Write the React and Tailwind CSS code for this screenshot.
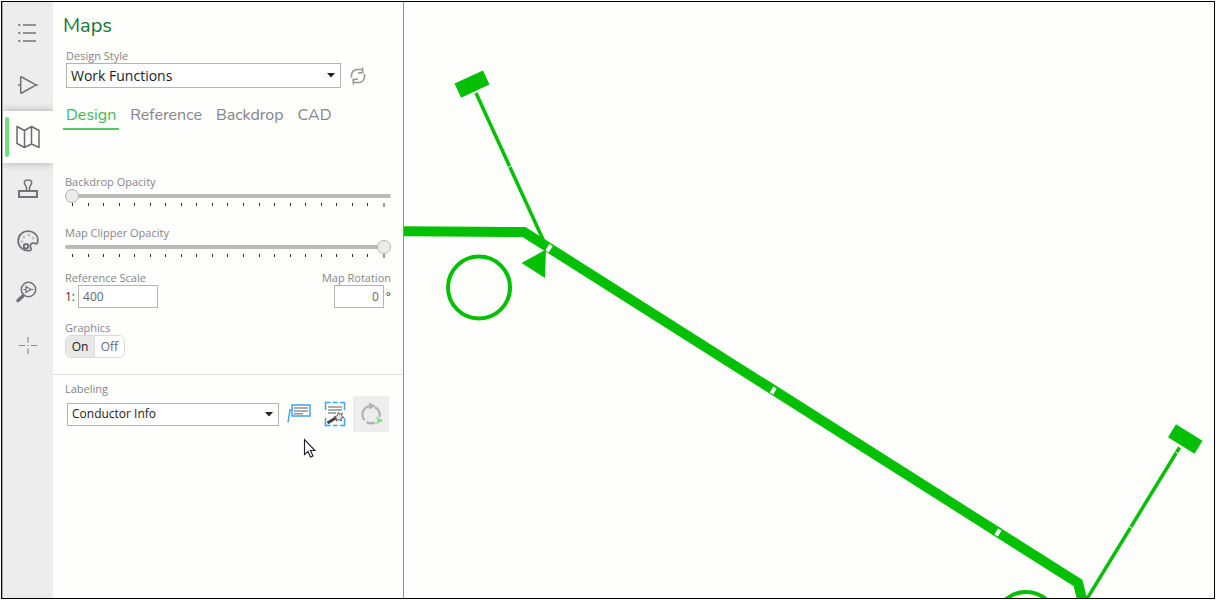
import { useState } from "react";

const ListIcon = () => (
  <svg width="20" height="20" viewBox="0 0 20 20" fill="none" stroke="#747478" strokeWidth="1.400">
    {[2, 10, 18].map((y) => (
      <path key={y} d={`M0 ${y}h2.500M5 ${y}h13`} />
    ))}
  </svg>
);

const DeviceIcon = () => (
  <svg width="22" height="20" viewBox="0 0 22 20" fill="none" stroke="#727276" strokeWidth="1.500">
    <path d="M1 10h3M18 10h3M3.700 2.600v14.800q0 1.200 1 .6L18 10.600q1-.6 0-1.200L4.700 2q-1-.6-1 .6z" />
  </svg>
);

const MapIcon = () => (
  <svg width="24" height="24" viewBox="0 0 24 24" fill="none" stroke="#6b6b70" strokeWidth="1.500" strokeLinejoin="round">
    <path d="M1 1.500l7.500 4v17L1 18.500zM8.500 5.500l7-4v17.500l-7 3.500M15.500 1.500l7.500 4v17l-7.500-3.500" />
  </svg>
);

const StampIcon = () => (
  <svg width="22" height="20" viewBox="0 0 22 20" fill="none" stroke="#727276">
    <path strokeWidth="2" d="M2 12h18v6H2z" />
    <path strokeWidth="1.500" d="M9.500 11.500V8.500L7.500 4.500V2.500Q8 1 11 1t3.500 1.500v2L12.500 8.500v3" />
  </svg>
);

const PaletteIcon = () => (
  <svg width="22" height="22" viewBox="0 0 22 22" fill="none" stroke="#727276">
    <path
      strokeWidth="1.800"
      d="M13.500 20.300C8 21.800 1.200 17.800 1.200 11 1.200 5.200 5.500 1.200 11 1.200c5.600 0 9.800 3.600 9.800 8.200 0 1.800-.2 3.600-.8 4-1 .6-2.700-.7-4.600-.3-2.400.6-2.300 3.300-1.600 4.700.4.900.4 2.200-.3 2.500z"
    />
    <circle cx="9" cy="16.300" r="2.200" strokeWidth="2" />
    <g fill="#c4c4c6" stroke="none">
      <circle cx="4.800" cy="11.500" r="1.500" />
      <circle cx="6.800" cy="7" r="1.500" />
      <circle cx="11.800" cy="5" r="1.500" />
      <circle cx="16" cy="8" r="1.500" />
    </g>
  </svg>
);

const SearchDeviceIcon = () => (
  <svg width="26" height="24" viewBox="0 0 26 24" fill="none" stroke="#727276">
    <circle cx="13.500" cy="8.500" r="7.200" strokeWidth="1.500" />
    <path strokeWidth="1.200" d="M8.500 8.500h2.500M16 8.500h2.500M11 5.500v6l5-3z" />
    <path strokeWidth="3.500" strokeLinecap="round" d="M3 19.500l5-4.500" />
  </svg>
);

const CrosshairIcon = () => (
  <svg width="20" height="20" viewBox="0 0 20 20" fill="none" stroke="#8c8c90" strokeWidth="1.200">
    <path d="M1 10.500h6M13 10.500h6M10 2v5.500M10 13.500v5.500" />
    <path d="M9 10.500h2" stroke="#b4b4b6" />
  </svg>
);

const RefreshIcon = () => (
  <svg width="16" height="18" viewBox="0 0 16 18" fill="none" stroke="#969698" strokeWidth="1.600">
    <path d="M1.500 10.500V8q.5-4.500 5-5.500H12M12.500.5l.3 5-4.800.5M14.500 7v3q-.5 4.500-5 5.500H4M3.500 17.500l-.3-5 4.800-.5" />
  </svg>
);

const CalloutIcon = () => (
  <svg width="24" height="20" viewBox="0 0 24 20" fill="none">
    <path d="M1 18.500L3 6h2" stroke="#3fa4f2" strokeWidth="1.500" />
    <path d="M5 1h18v11H5z" stroke="#3fa4f2" strokeWidth="1.500" />
    <path d="M7 4h14M7 7h14M7 9.700h9" stroke="#929294" strokeWidth="1.400" />
  </svg>
);

const AutoLabelIcon = () => (
  <svg width="22" height="26" viewBox="0 0 22 26" fill="none">
    <path
      d="M1.500 9V1.500H6.500M9 1.500h4.500M16 1.500h4.500V9M1.500 17v7.500H6.500M9 24.500h4.500M16 24.500h4.500V17"
      stroke="#3fa4f2"
      strokeWidth="1.500"
    />
    <path d="M4 6h14M4 9h14M4 12h8" stroke="#929294" strokeWidth="1.500" />
    <path d="M3.500 22l9-5.500" stroke="#444444" strokeWidth="3" />
    <path
      d="M14.500 11l1 2.500 3-1.500-1 3 2.500 1.500-3 .5.500 3-2.500-1.500-2.500 1.500V17l-2.500-1.500 3-.5z"
      fill="#e4e4e4"
      stroke="#66666a"
      strokeWidth="1"
    />
  </svg>
);

const RerunIcon = () => (
  <svg width="24" height="24" viewBox="0 0 24 24" fill="none">
    <path d="M10 4.300A8.500 8.500 0 0 0 5.500 18M15.500 5A8.500 8.500 0 0 1 20.500 15M7.500 20q4 2.500 8.500.5" stroke="#b2b2b4" strokeWidth="2.200" />
    <path d="M10 .5l6.500 3.500-6.500 3.500z" fill="#b2b2b4" />
    <path d="M17 14.500l7 4-7 4 1.500-4z" fill="#85dc90" />
  </svg>
);

const navItems = [
  { name: "List", icon: ListIcon },
  { name: "Devices", icon: DeviceIcon },
  { name: "Maps", icon: MapIcon },
  { name: "Stamp", icon: StampIcon },
  { name: "Styles", icon: PaletteIcon },
  { name: "Find", icon: SearchDeviceIcon },
  { name: "Locate", icon: CrosshairIcon },
];

const Sidebar = () => (
  <nav className="flex w-[51px] shrink-0 flex-col border-l border-[#a9adb3] bg-[#ededee] pt-[5px]">
    {navItems.map(({ name, icon: Icon }) =>
      name === "Maps" ? (
        <button
          key={name}
          aria-label={name}
          className="flex h-[52px] items-center bg-[#fefefd] pl-0.5 shadow-[0_0_8px_rgba(0,0,0,0.3)] [clip-path:inset(-10px_0_-10px_0)]"
        >
          <span className="h-10 w-1 rounded-full bg-[#6ee07a]" />
          <span className="flex grow justify-center pr-1.5">
            <Icon />
          </span>
        </button>
      ) : (
        <button key={name} aria-label={name} className="flex h-[52px] items-center justify-center">
          <Icon />
        </button>
      )
    )}
  </nav>
);

const Dropdown = ({ id, value, className }) => (
  <div className="grid grow items-center">
    <select
      id={id}
      className={`w-full appearance-none rounded-none border border-[#b4b4b4] bg-white px-1 text-[#1c1c1c] [grid-area:1/1] ${className}`}
    >
      <option>{value}</option>
    </select>
    <svg className="pointer-events-none mr-[5px] justify-self-end [grid-area:1/1]" width="10" height="5" viewBox="0 0 10 5">
      <path d="M1 0h8L5 4.500z" fill="#222" />
    </svg>
  </div>
);

const OpacitySlider = ({ id, label, initial }) => {
  const [value, setValue] = useState(initial);
  return (
    <div className="flex flex-col">
      <label htmlFor={id} className="h-[15px] leading-4">
        {label}
      </label>
      <input
        id={id}
        type="range"
        min="0"
        max="100"
        value={value}
        onChange={(e) => setValue(e.target.value)}
        className="h-3.5 w-full appearance-none bg-transparent [&::-webkit-slider-runnable-track]:h-1 [&::-webkit-slider-runnable-track]:rounded-full [&::-webkit-slider-runnable-track]:bg-[#bababa] [&::-webkit-slider-thumb]:-mt-[5px] [&::-webkit-slider-thumb]:size-3.5 [&::-webkit-slider-thumb]:appearance-none [&::-webkit-slider-thumb]:rounded-full [&::-webkit-slider-thumb]:border [&::-webkit-slider-thumb]:border-[#b4b4b4] [&::-webkit-slider-thumb]:bg-[#ececec]"
      />
      <div className="flex h-1 justify-between pr-1.5 pl-[7px]">
        {Array.from({ length: 21 }, (_, i) => (
          <span key={i} className={i === 20 ? "h-1 w-0.5 bg-[#999999]" : "h-[3px] w-px bg-[#333333]"} />
        ))}
      </div>
    </div>
  );
};

const tabs = ["Design", "Reference", "Backdrop", "CAD"];

const MapsPanel = () => {
  const [tab, setTab] = useState("Design");
  return (
    <section className="w-[351px] shrink-0 border-r border-[#42c45a] bg-[#fefefd] text-[11px] text-[#858588]">
      <h1 className="pt-2.5 pl-2.5 font-[Nunito,'Noto_Sans',sans-serif] text-xl leading-7 text-[#0f7a33]">Maps</h1>

      <div className="flex flex-col pt-2 pr-3 pl-[13px]">
        <label htmlFor="design-style" className="h-[15px] leading-4">
          Design Style
        </label>
        <div className="flex items-center gap-[9px] pr-[25px]">
          <Dropdown id="design-style" value="Work Functions" className="h-[25px] text-sm" />
          <button aria-label="Refresh styles">
            <RefreshIcon />
          </button>
        </div>
      </div>

      <div role="tablist" className="flex gap-2 pt-[15px] pl-2.5 font-[Nunito,'Noto_Sans',sans-serif] text-base leading-6">
        {tabs.map((name) => (
          <button
            key={name}
            role="tab"
            aria-selected={tab === name}
            onClick={() => setTab(name)}
            className={`border-b-2 px-[3px] pb-px ${tab === name ? "border-[#4bcb62] text-[#3fb956]" : "border-transparent"}`}
          >
            {name}
          </button>
        ))}
      </div>

      <div className="flex flex-col gap-[18px] pt-11 pr-3 pl-3">
        <OpacitySlider id="backdrop-opacity" label="Backdrop Opacity" initial={0} />
        <OpacitySlider id="clipper-opacity" label="Map Clipper Opacity" initial={100} />
      </div>

      <div className="flex justify-between pt-3 pr-3 pl-3">
        <div className="flex flex-col">
          <label htmlFor="reference-scale" className="h-[15px] leading-4">
            Reference Scale
          </label>
          <div className="flex items-center gap-[3px] text-xs text-[#333333]">
            <span>1:</span>
            <input
              id="reference-scale"
              defaultValue="400"
              className="h-[23px] w-20 border border-[#b4b4b4] bg-white px-1 text-[#66666a]"
            />
          </div>
        </div>
        <div className="flex flex-col items-end">
          <label htmlFor="map-rotation" className="h-[15px] leading-4">
            Map Rotation
          </label>
          <div className="flex items-center gap-0.5 text-xs text-[#333333]">
            <input
              id="map-rotation"
              defaultValue="0"
              className="h-[23px] w-[50px] border border-[#b4b4b4] bg-white px-1 text-right text-[#66666a]"
            />
            <span>°</span>
          </div>
        </div>
      </div>

      <div className="flex flex-col items-start border-b border-[#dcdcdc] pt-3 pb-4 pl-3">
        <span id="graphics-label" className="h-[15px] leading-4">
          Graphics
        </span>
        <div role="group" aria-labelledby="graphics-label" className="flex h-[23px] rounded-md border border-[#dadada] text-xs">
          <button className="w-[29px] rounded-l-md border-r border-[#dadada] bg-[#e8e8e8] text-[#1c1c1c]">On</button>
          <button className="w-[29px] rounded-r-md bg-white text-[#66666a]">Off</button>
        </div>
      </div>

      <div className="flex flex-col pt-1.5 pr-3.5 pl-3">
        <label htmlFor="labeling" className="h-[15px] leading-4">
          Labeling
        </label>
        <div className="flex items-center pl-0.5">
          <Dropdown id="labeling" value="Conductor Info" className="h-[23px] text-xs" />
          <button aria-label="Add label" className="ml-2">
            <CalloutIcon />
          </button>
          <button aria-label="Auto label" className="ml-[13px]">
            <AutoLabelIcon />
          </button>
          <button aria-label="Rerun" className="ml-[7px] flex size-9 items-center justify-center bg-[#ededee]">
            <RerunIcon />
          </button>
        </div>
      </div>
    </section>
  );
};

const NetworkMap = () => (
  <svg
    className="h-full min-w-0 grow bg-[#fefefd]"
    viewBox="404 2 810 596"
    preserveAspectRatio="xMinYMin slice"
    fill="none"
    stroke="#04c004"
    aria-label="Network map"
  >
    {/* Main conductor with its joints */}
    <path strokeWidth="10" d="M400 231.300L524 232 1078 583l5 20" />
    <g stroke="#fefefd" strokeWidth="4">
      <path d="M547 251.500l4-6.500M771.500 393.500l3.500-6M996.200 535.500l3.500-6" />
    </g>
    {/* Service lines */}
    <path strokeWidth="3.500" d="M476 93L546 246M1179.500 447.500L1085 602" />
    <g stroke="#fefefd" strokeWidth="1">
      <path d="M508 167.500l4-2M1129 526.500l3.500 2M1175.500 452l4 2.500" />
    </g>
    <g fill="#04c004" stroke="none">
      <path d="M454.500 83.500L483 70.500l6.500 14L461 97.700zM1176 424.300l26.500 16.500-8 13L1168 437.300zM521.500 263l24.500-13.500-1 28.500z" />
    </g>
    <circle cx="479" cy="287.500" r="31" strokeWidth="4" />
    <circle cx="1026" cy="623" r="31" strokeWidth="4" />
  </svg>
);

const Pointer = () => (
  <svg className="pointer-events-none absolute top-[438px] left-[303px]" width="13" height="21" viewBox="0 0 13 21">
    <path
      d="M1.500 1.500v15l3.500-3 2.500 5.500 2.500-1-2.500-5.500h4.500z"
      fill="#fff"
      stroke="#1c1c2c"
      strokeWidth="1.100"
    />
  </svg>
);

export default function App() {
  return (
    <div className="relative h-screen bg-white p-px font-['Open_Sans','Noto_Sans',sans-serif]">
      <main className="flex h-full overflow-hidden border border-black">
        <Sidebar />
        <MapsPanel />
        <NetworkMap />
      </main>
      <Pointer />
    </div>
  );
}
